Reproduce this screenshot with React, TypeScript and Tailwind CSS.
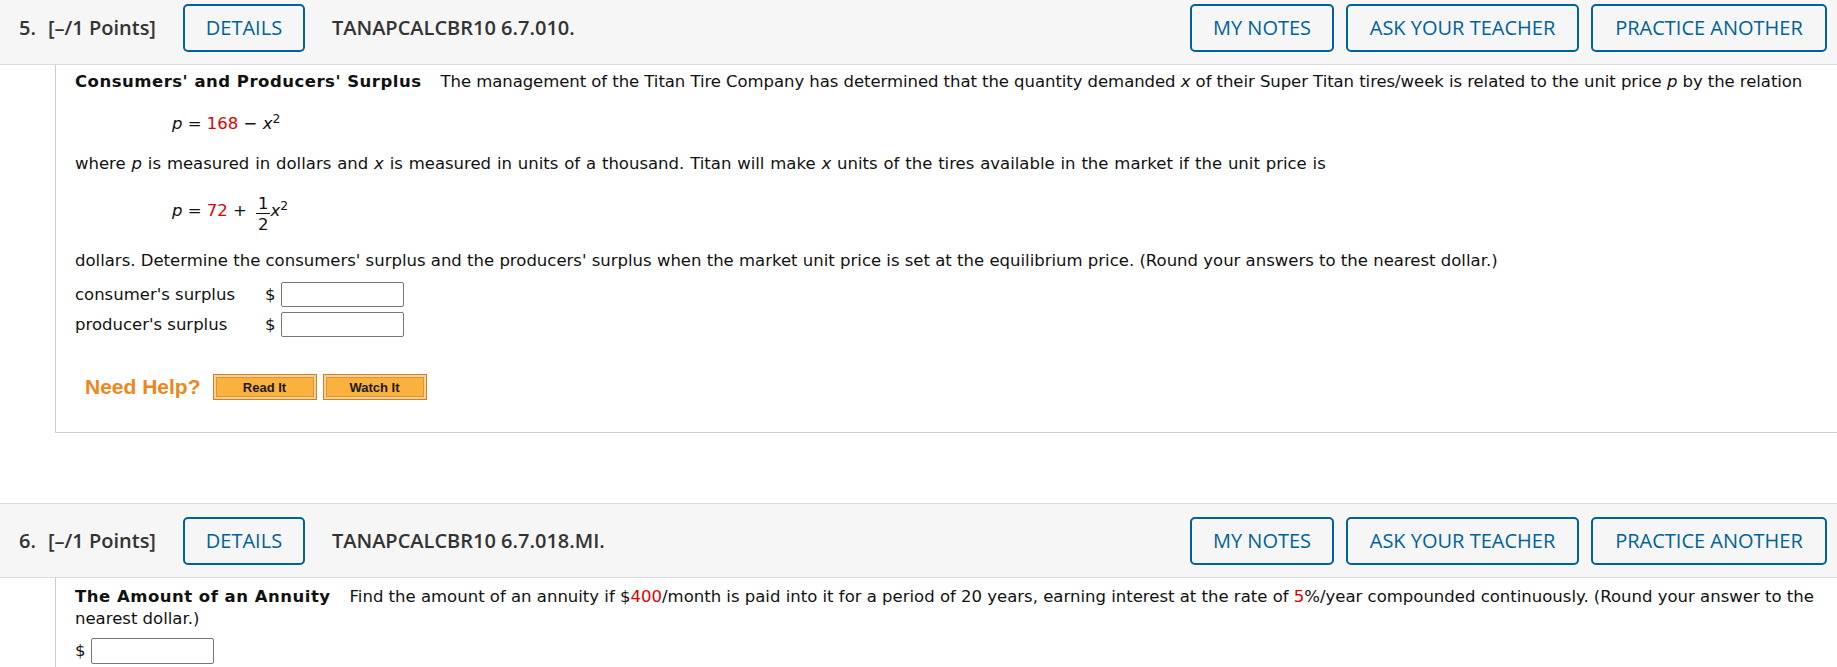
import React from "react";

function Header({ num, code }: { num: string; code: string }) {
  const btn =
    "flex h-[48px] items-center justify-center rounded-[5px] border-2 border-[#00629b] text-[#00629b] font-normal";
  return (
    <div className="flex h-[75px] items-center border-y border-[#dcdcdc] bg-[#f6f6f6] pl-[19px] pr-[10px] font-['Open_Sans',sans-serif] text-[20px] text-[#333333]">
      <span className="font-semibold">{num}</span>
      <span className="ml-[12px] font-semibold">[–/1 Points]</span>
      <div className={`ml-[27px] w-[122px] ${btn}`}>DETAILS</div>
      <span className="ml-[27px] font-semibold">{code}</span>
      <div className="ml-auto flex gap-[12px]">
        <div className={`w-[144px] ${btn}`}>MY NOTES</div>
        <div className={`w-[233px] ${btn}`}>ASK YOUR TEACHER</div>
        <div className={`w-[236px] ${btn}`}>PRACTICE ANOTHER</div>
      </div>
    </div>
  );
}

function HelpButton({ label }: { label: string }) {
  return (
    <div className="h-[26px] w-[104px] border border-[#cf7f2c] bg-[#fcd08a] p-[2px]">
      <div className="flex h-full w-full items-center justify-center border border-[#d59645] bg-[#fbb13d] font-['Liberation_Sans',Arial,sans-serif] text-[13px] font-bold leading-none text-[#1a1a1a]">
        {label}
      </div>
    </div>
  );
}

const red = "text-[#e00000]";

export default function App() {
  return (
    <div className="h-[667px] w-[1837px] overflow-hidden bg-white">
      <div className="mt-[-10px]">
        <Header num="5." code="TANAPCALCBR10 6.7.010." />
        <div className="ml-[55px] border-b border-l border-[#cccccc] pb-[32px] pl-[19px] pr-[7px] pt-[6px] font-['DejaVu_Sans',Verdana,sans-serif] text-[16.5px] leading-[22px] text-[#111111]">
          <p className="whitespace-nowrap">
            <b className="mr-[19px] tracking-[0.5px]">Consumers' and Producers' Surplus</b>
            <span className="tracking-[-0.06px]">
              The management of the Titan Tire Company has determined that the quantity demanded <i>x</i> of their
              Super Titan tires/week is related to the unit price <i>p</i> by the relation
            </span>
          </p>
          <div className="mt-[20px] pl-[97px]">
            <i>p</i> = <span className={red}>168</span> − <i>x</i>
            <sup>2</sup>
          </div>
          <p className="mt-[18px] [word-spacing:0.6px]">
            where <i>p</i> is measured in dollars and <i>x</i> is measured in units of a thousand. Titan will make{" "}
            <i>x</i> units of the tires available in the market if the unit price is
          </p>
          <div className="mt-[20px] flex items-start pl-[97px]">
            <span className="mt-[5px]">
              <i>p</i> = <span className={red}>72</span> +
            </span>
            <span className="ml-[9px] flex flex-col items-center">
              <span className="border-b border-[#111111] px-[2px] leading-[18px]">1</span>
              <span className="leading-[21px]">2</span>
            </span>
            <span className="mt-[5px]">
              <i>x</i>
              <sup>2</sup>
            </span>
          </div>
          <p className="mt-[15px]">
            dollars. Determine the consumers' surplus and the producers' surplus when the market unit price is set at
            the equilibrium price. (Round your answers to the nearest dollar.)
          </p>
          <div className="mt-[10px] flex h-[25px] items-center">
            <span className="w-[190px]">consumer's surplus</span>
            <span>$</span>
            <input
              readOnly
              className="ml-[5px] h-[25px] w-[123px] rounded-[2px] border border-[#767676] bg-white"
            />
          </div>
          <div className="mt-[5px] flex h-[25px] items-center">
            <span className="w-[190px]">producer's surplus</span>
            <span>$</span>
            <input
              readOnly
              className="ml-[5px] h-[25px] w-[123px] rounded-[2px] border border-[#767676] bg-white"
            />
          </div>
          <div className="ml-[10px] mt-[37px] flex h-[26px] items-center">
            <span className="font-['Liberation_Sans',Arial,sans-serif] text-[21px] font-bold leading-[26px] text-[#f0861a]">
              Need Help?
            </span>
            <div className="ml-[12px] flex gap-[6px]">
              <HelpButton label="Read It" />
              <HelpButton label="Watch It" />
            </div>
          </div>
        </div>
        <div className="h-[70px]" />
        <Header num="6." code="TANAPCALCBR10 6.7.018.MI." />
        <div className="ml-[55px] h-[200px] border-l border-[#cccccc] pl-[19px] pr-[20px] pt-[8px] font-['DejaVu_Sans',Verdana,sans-serif] text-[16.5px] leading-[22px] text-[#111111]">
          <p>
            <b className="mr-[19px] tracking-[0.5px]">The Amount of an Annuity</b>
            Find the amount of an annuity if $<span className={red}>400</span>/month is paid into it for a period of 20
            years, earning interest at the rate of <span className={red}>5</span>%/year compounded continuously. (Round
            your answer to the nearest dollar.)
          </p>
          <div className="mt-[8px] flex h-[26px] items-center">
            <span>$</span>
            <input
              readOnly
              className="ml-[5px] h-[26px] w-[123px] rounded-[2px] border border-[#767676] bg-white"
            />
          </div>
        </div>
      </div>
    </div>
  );
}
